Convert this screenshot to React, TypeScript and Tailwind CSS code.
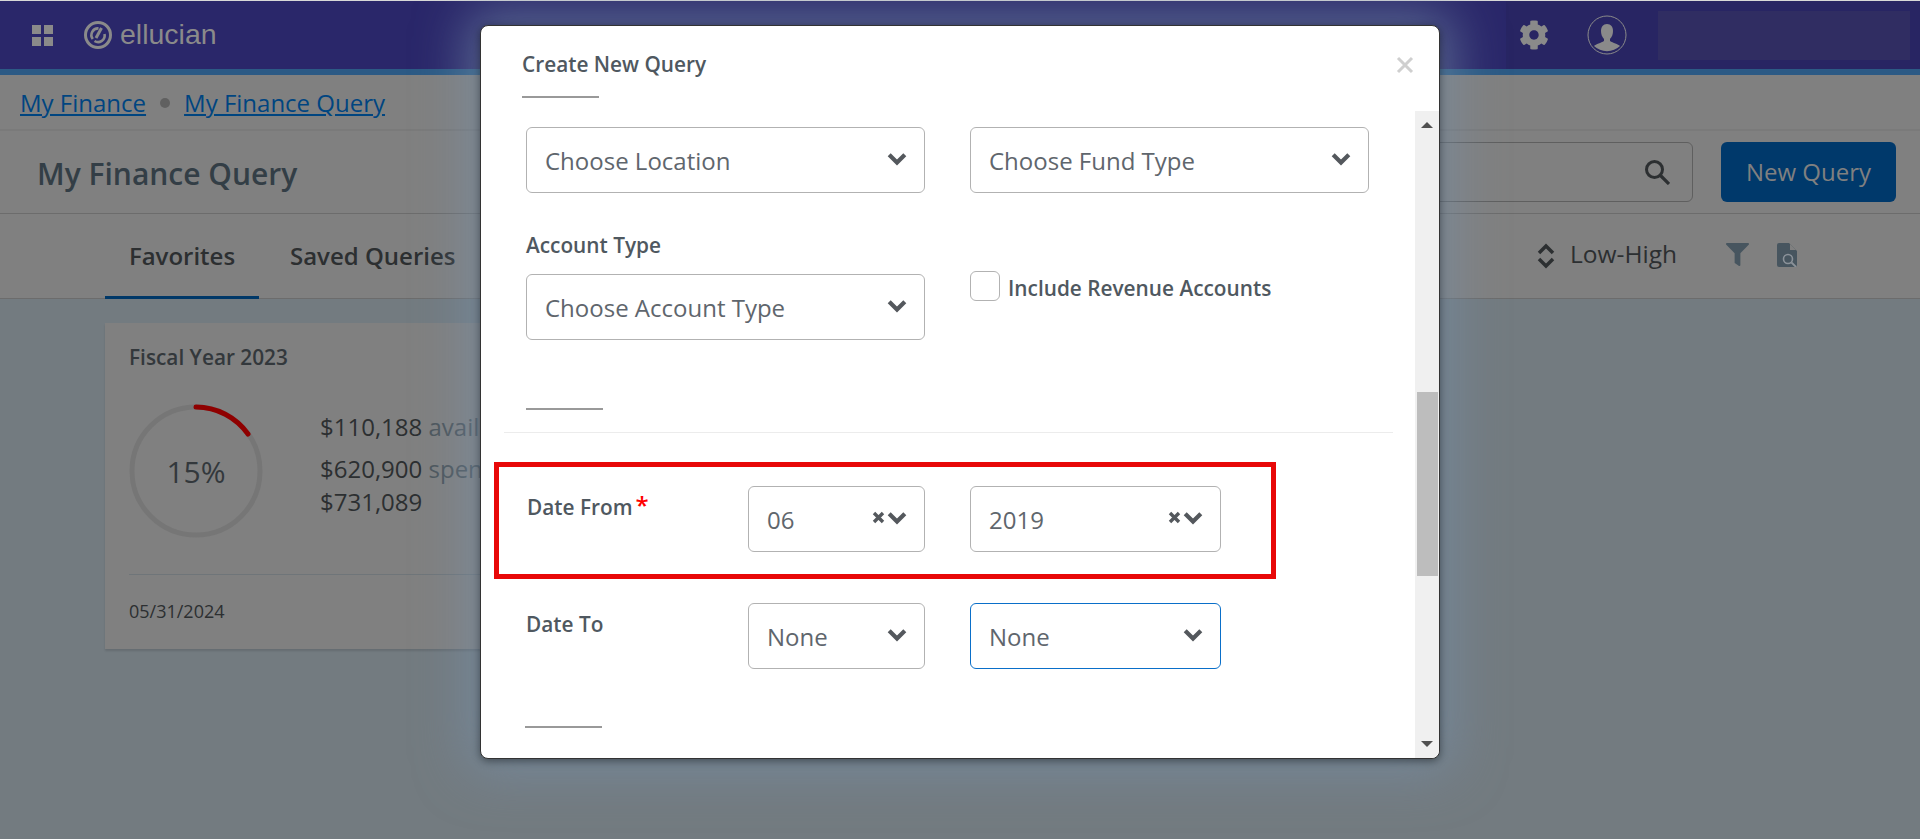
import { FaCog, FaFilter } from 'react-icons/fa';

const font = { fontFamily: '"Open Sans", sans-serif' };

function Chevron() {
  return (
    <svg width="20" height="14" viewBox="0 0 20 14" className="shrink-0">
      <path d="M2.2 2.8 L10 10.6 L17.8 2.8" fill="none" stroke="#54585d" strokeWidth="4.2" />
    </svg>
  );
}

function Clear() {
  return (
    <svg width="13" height="13" viewBox="0 0 13 13" className="shrink-0">
      <path d="M2 2 L11 11 M11 2 L2 11" fill="none" stroke="#54585d" strokeWidth="3.4" />
    </svg>
  );
}

function Select({
  label,
  width,
  filled,
  focused,
}: {
  label: string;
  width: string;
  filled?: boolean;
  focused?: boolean;
}) {
  return (
    <div
      className={`${width} h-[66px] shrink-0 flex items-center rounded-[6px] border bg-white pl-[18px] pr-[17px] ${
        focused ? 'border-[#0a6fc9]' : 'border-[#b2b2b2]'
      }`}
    >
      <span className="flex-1 text-[24px] text-[#5f666d] pt-[2px]">{label}</span>
      <span className="flex items-center gap-[2px] -mt-[3px]">
        {filled && <Clear />}
        <Chevron />
      </span>
    </div>
  );
}

function Rule({ className }: { className: string }) {
  return <div className={`w-[77px] h-[2px] bg-[#999999] ${className}`} />;
}

function Logo() {
  return (
    <svg width="30" height="30" viewBox="0 0 30 30" className="shrink-0">
      <circle cx="15" cy="15" r="12.5" fill="none" stroke="#8a8a8a" strokeWidth="3" />
      <path d="M9.8 19 A6.6 6.6 0 0 1 15.5 8.4" fill="none" stroke="#8a8a8a" strokeWidth="2.6" />
      <path d="M11.5 21 A6.6 6.6 0 0 0 21.5 14" fill="none" stroke="#8a8a8a" strokeWidth="2.6" />
      <path d="M13 18 L18.5 8" fill="none" stroke="#8a8a8a" strokeWidth="3" />
    </svg>
  );
}

function TopBar() {
  return (
    <div className="h-[75px] border-t border-[#d8d8d8] bg-[#2a276a] border-b-[6px] border-b-[#2c5a85] flex items-center">
      <div className="grid grid-cols-2 gap-[3px] ml-[32px] w-[21px]">
        <div className="h-[9px] bg-[#8a8a8a]" />
        <div className="h-[9px] bg-[#8a8a8a]" />
        <div className="h-[9px] bg-[#8a8a8a]" />
        <div className="h-[9px] bg-[#8a8a8a]" />
      </div>
      <div className="ml-[30px] flex items-center gap-[7px]">
        <Logo />
        <span
          className="text-[28.5px] leading-none text-[#8a8a8a] pb-[2px]"
          style={{ fontFamily: '"Liberation Sans", sans-serif' }}
        >
          ellucian
        </span>
      </div>
      <div className="ml-auto w-[414px] h-full bg-[#282563] flex items-center pl-[13px]">
        <FaCog className="text-[#8a8a8a] w-[30px] h-[30px] shrink-0" />
        <svg width="40" height="40" viewBox="0 0 40 40" className="ml-[38px] shrink-0">
          <circle cx="20" cy="20" r="19" fill="none" stroke="#8a8a8a" strokeWidth="1" />
          <path
            d="M20 9 c4 0 6 3 6 7 c0 3 -1 6 -3 8 v2 c3 2 8 3 10 5 a19 19 0 0 1 -26 0 c2 -2 7 -3 10 -5 v-2 c-2 -2 -3 -5 -3 -8 c0 -4 2 -7 6 -7 z"
            fill="#8a8a8a"
          />
        </svg>
        <div className="ml-[31px] w-[252px] h-[49px] bg-[#302d62]" />
      </div>
    </div>
  );
}

function Card() {
  return (
    <div className="ml-[105px] mt-[24px] w-[520px] h-[326px] bg-[#808080] shadow-[0_2px_2px_rgba(0,0,0,0.12)] px-[24px] pt-[19px]">
      <div className="text-[20.8px] font-semibold text-[#33383c]">Fiscal Year 2023</div>
      <div className="flex mt-[31px] h-[145px]">
        <div className="relative w-[134px] h-[134px] shrink-0">
          <svg width="134" height="134" viewBox="0 0 134 134">
            <circle cx="67" cy="67" r="64" fill="none" stroke="#767676" strokeWidth="5" />
            <path d="M67 3 A64 64 0 0 1 119 30" fill="none" stroke="#8f0000" strokeWidth="5" strokeLinecap="round" />
          </svg>
          <div className="absolute inset-0 flex items-center justify-center text-[30px] text-[#33383c]">15%</div>
        </div>
        <div className="ml-[57px] text-[24px] text-[#2c2f31] whitespace-nowrap">
          <div className="leading-[30px] mt-[8px]">
            $110,188 <span className="text-[#4d565c]">available</span>
          </div>
          <div className="leading-[30px] mt-[12px]">
            $620,900 <span className="text-[#4d565c]">spent</span>
          </div>
          <div className="leading-[30px] mt-[3px]">$731,089</div>
        </div>
      </div>
      <div className="h-px bg-[#6f7579] mt-[25px]" />
      <div className="text-[18px] text-[#2c2f31] mt-[23px]">05/31/2024</div>
    </div>
  );
}

function Page() {
  return (
    <div className="h-full bg-[#737b80]">
      <TopBar />
      <div className="h-[56px] bg-[#808080] border-b-[2px] border-b-[#7a7a7a] flex items-center pl-[20px] pt-[2px] text-[24px] text-[#004580]">
        <span className="underline">My Finance</span>
        <span className="w-[10px] h-[10px] rounded-full bg-[#606060] mx-[14px]" />
        <span className="underline">My Finance Query</span>
      </div>
      <div className="h-[83px] bg-[#808080] border-b border-b-[#6c6c6c] flex items-center pl-[37px] pr-[24px]">
        <span className="text-[30px] font-semibold text-[#333e46] pt-[2px]">My Finance Query</span>
        <div className="ml-auto w-[500px] h-[60px] rounded-[6px] border border-[#5f5f5f] flex items-center justify-end pr-[22px]">
          <svg width="26" height="26" viewBox="0 0 26 26">
            <circle cx="10.5" cy="10.5" r="8" fill="none" stroke="#2c2f31" strokeWidth="3" />
            <path d="M16.5 16.5 L25 25" stroke="#2c2f31" strokeWidth="3.2" />
          </svg>
        </div>
        <div className="ml-[28px] w-[175px] h-[60px] rounded-[6px] bg-[#00396b] text-[#808080] text-[24px] flex items-center justify-center">
          New Query
        </div>
      </div>
      <div className="h-[85px] bg-[#808080] border-b border-b-[#6c6c6c] flex items-stretch pl-[105px] pr-[123px]">
        <div className="w-[154px] border-b-[3px] border-b-[#003868] -mb-px flex items-center justify-center font-semibold text-[24px] text-[#2c2f31] pt-[2px]">
          Favorites
        </div>
        <div className="ml-[31px] flex items-center text-[24px] font-semibold text-[#2c2f31]">Saved Queries</div>
        <div className="ml-auto flex items-center -mt-[3px]">
          <svg width="20" height="26" viewBox="0 0 20 26" className="shrink-0 mt-[2px]">
            <path d="M3 10 L10 3 L17 10 M3 16 L10 23 L17 16" fill="none" stroke="#2c2f31" strokeWidth="3.5" />
          </svg>
          <span className="ml-[14px] text-[24.5px] text-[#2c2f31]">Low-High</span>
          <FaFilter className="ml-[49px] w-[23px] h-[23px] text-[#47555f]" />
          <svg width="20" height="24" viewBox="0 0 20 24" className="ml-[28px] shrink-0">
            <path d="M2 0 H12 L20 8 V22 a2 2 0 0 1 -2 2 H2 a2 2 0 0 1 -2 -2 V2 a2 2 0 0 1 2 -2 z" fill="#47555f" />
            <path d="M13 1 L19 7 H13 z" fill="#808080" />
            <circle cx="11" cy="16" r="4.5" fill="none" stroke="#8b9299" strokeWidth="1.6" />
            <path d="M14.5 19.5 L19 24" stroke="#8b9299" strokeWidth="1.8" />
          </svg>
        </div>
      </div>
      <Card />
    </div>
  );
}

function Scrollbar() {
  return (
    <div className="w-[24px] h-full bg-[#f0f0f0] flex flex-col items-center shrink-0">
      <div className="w-0 h-0 mt-[11px] border-x-[6px] border-x-transparent border-b-[6px] border-b-[#505050]" />
      <div className="w-[21px] h-[184px] bg-[#bdbdbd] mt-[264px]" />
      <div className="w-0 h-0 mt-[165px] border-x-[6px] border-x-transparent border-t-[6px] border-t-[#505050]" />
    </div>
  );
}

function Modal() {
  return (
    <div className="absolute left-[480px] top-[25px] w-[960px] h-[734px] bg-white rounded-[8px] border border-[#333] flex flex-col shadow-[0_2px_8px_rgba(0,0,0,0.45),0_0_50px_14px_rgba(118,144,168,0.6)]">
      <div className="h-[85px] shrink-0 pl-[41px] pr-[24px] relative">
        <div className="text-[20.8px] font-semibold text-[#4f5860] pt-[25px] leading-[26px]">Create New Query</div>
        <div className="mt-[19px] w-[77px] h-[2px] bg-[#999999]" />
        <span className="absolute right-[25px] top-[30px]">
          <svg width="18" height="18" viewBox="0 0 18 18">
            <path d="M2 2 L16 16 M16 2 L2 16" stroke="#cfcfcf" strokeWidth="3" />
          </svg>
        </span>
      </div>
      <div className="flex-1 min-h-0 flex rounded-b-[8px] overflow-hidden">
        <div className="flex-1 min-w-0">
          <div className="flex gap-[45px] pl-[45px] pt-[16px]">
            <Select label="Choose Location" width="w-[399px]" />
            <Select label="Choose Fund Type" width="w-[399px]" />
          </div>
          <div className="flex gap-[45px] pl-[45px] mt-[39px]">
            <div>
              <div className="text-[20.8px] font-semibold text-[#4f5860] leading-[26px] mb-[16px]">Account Type</div>
              <Select label="Choose Account Type" width="w-[399px]" />
            </div>
            <label className="flex items-center h-[30px] mt-[39px] gap-[8px] text-[20.8px] font-semibold text-[#4f5860]">
              <span className="w-[30px] h-[30px] rounded-[6px] border border-[#b2b2b2]" />
              <span className="pt-[5px]">Include Revenue Accounts</span>
            </label>
          </div>
          <Rule className="ml-[45px] mt-[68px]" />
          <div className="ml-[23px] mr-[22px] h-px bg-[#ececec] mt-[22px]" />
          <div className="mt-[29px] ml-[13px] w-[782px] h-[117px] border-[5px] border-[#e80808] pt-[19px] pl-[28px] flex">
            <div className="w-[221px] text-[20.8px] font-semibold text-[#4f5860] leading-[26px] pt-[8px] flex items-start">
              Date From<span className="text-[#f00] text-[24px] leading-[22px] ml-[3px]">*</span>
            </div>
            <Select label="06" width="w-[177px]" filled />
            <div className="w-[45px]" />
            <Select label="2019" width="w-[251px]" filled />
          </div>
          <div className="mt-[24px] pl-[45px] flex">
            <div className="w-[222px] text-[20.8px] font-semibold text-[#4f5860] leading-[26px] pt-[8px]">Date To</div>
            <Select label="None" width="w-[177px]" />
            <div className="w-[45px]" />
            <Select label="None" width="w-[251px]" focused />
          </div>
          <Rule className="ml-[44px] mt-[57px]" />
        </div>
        <Scrollbar />
      </div>
    </div>
  );
}

export default function App() {
  return (
    <div className="relative w-[1920px] h-[839px] overflow-hidden" style={font}>
      <Page />
      <Modal />
    </div>
  );
}
